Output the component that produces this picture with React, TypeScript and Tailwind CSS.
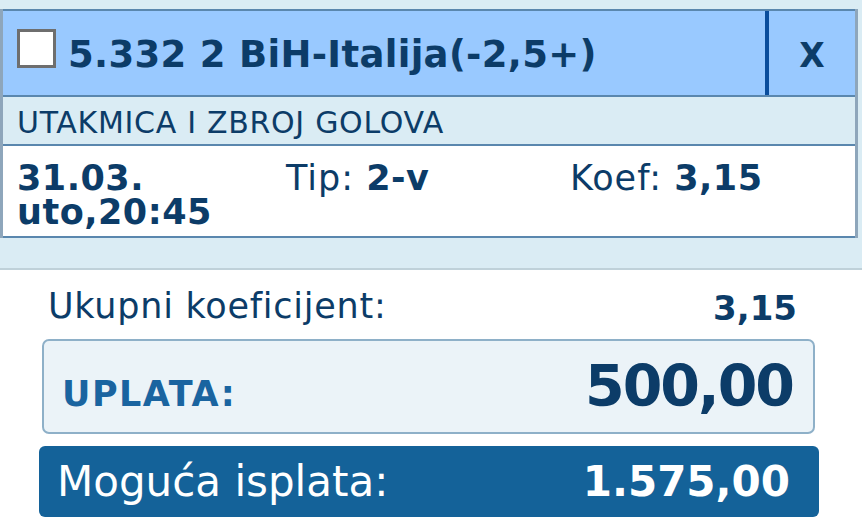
import React from 'react'

type Ticket = {
  code: string
  market: string
  date: string
  time: string
  tip: string
  koef: string
}

const ticket: Ticket = {
  code: '5.332 2 BiH-Italija(-2,5+)',
  market: 'UTAKMICA I ZBROJ GOLOVA',
  date: '31.03.',
  time: 'uto,20:45',
  tip: '2-v',
  koef: '3,15',
}

function BetRow({ t }: { t: Ticket }) {
  return (
    <div className="border-x-[3px] border-[#8ea6bb] w-[858px]">
      <div className="flex h-[88px] bg-[#99c9ff] border-y-2 border-[#5a87ae]">
        <div className="flex flex-1 items-start">
          <div className="ml-[14px] mt-[18px] w-[39px] h-[39px] border-[3px] border-[#6e6e6e] bg-white" />
          <div className="ml-[12px] mt-[25px] text-[37px] leading-none font-bold tracking-[0.3px] text-[#0c3c68]">{t.code}</div>
        </div>
        <div className="w-[90px] border-l-[4px] border-[#0a4d9c] flex items-center justify-center">
          <span className="text-[33px] leading-none font-bold text-[#0c3c68] mt-[4px]">X</span>
        </div>
      </div>
      <div className="h-[49px] bg-[#daecf4] border-b-2 border-[#5a87ae] flex items-center pl-[14px] pt-[5px]">
        <span className="text-[30px] leading-none tracking-[0.7px] text-[#0c3c68]">{t.market}</span>
      </div>
      <div className="h-[92px] bg-white border-b-2 border-[#5a87ae] grid grid-cols-[269px_284px_1fr] pl-[14px] pt-[15px] text-[35px] leading-[34px] text-[#0c3c68]">
        <div className="font-bold tracking-[0.5px]">
          <div>{t.date}</div>
          <div>{t.time}</div>
        </div>
        <div className="tracking-[1px]">
          Tip: <span className="font-bold tracking-[0.5px]">{t.tip}</span>
        </div>
        <div className="tracking-[1px]">
          Koef: <span className="font-bold tracking-[0.5px]">{t.koef}</span>
        </div>
      </div>
    </div>
  )
}

export default function App() {
  return (
    <div className="w-[862px] h-[528px] bg-white overflow-hidden font-['DejaVu_Sans',sans-serif]">
      <div className="bg-[#daecf4] pt-[9px] pb-[30px] border-b-2 border-[#bfd1d9]">
        <BetRow t={ticket} />
      </div>

      <div className="mt-[19px] ml-[48px] mr-[65px] h-[36px] flex justify-between items-start text-[#0c3c68]">
        <div className="h-[36px] overflow-hidden">
          <span className="block text-[35px] leading-none tracking-[0.75px]">Ukupni koeficijent:</span>
        </div>
        <span className="text-[34px] leading-none font-bold mt-[2px]">3,15</span>
      </div>

      <div className="mt-[14px] ml-[42px] w-[773px] h-[95px] rounded-[7px] border-2 border-[#8eb0c8] bg-[#ebf3f8] flex items-baseline justify-between pl-[18px] pr-[18px] pt-[17px]">
        <span className="text-[35px] leading-none font-bold tracking-[1.5px] text-[#1a64a0]">UPLATA:</span>
        <span className="text-[57px] leading-none font-bold tracking-[-2px] mr-[2px] text-[#0c3c68]">500,00</span>
      </div>

      <div className="mt-[12px] ml-[39px] w-[780px] h-[71px] rounded-[6px] bg-[#146299] flex items-center justify-between pl-[18px] pr-[29px] text-white">
        <span className="text-[42px] leading-none">Moguća isplata:</span>
        <span className="text-[42px] leading-none font-bold">1.575,00</span>
      </div>
    </div>
  )
}
